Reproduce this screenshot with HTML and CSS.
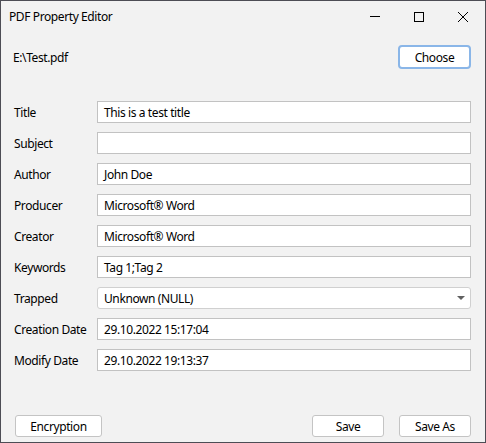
FILE: index.html
```html
<!DOCTYPE html>
<html>
<head>
<meta charset="utf-8">
<link rel="stylesheet" href="styles.css">
</head>
<body>
<div class="window">
  <div class="titlebar">
    <span class="title">PDF Property Editor</span>
    <div class="controls">
      <span class="ctl"><svg width="12" height="12" viewBox="0 0 12 12"><line x1="1" y1="5.5" x2="11" y2="5.5" stroke="#000" stroke-width="1"/></svg></span>
      <span class="ctl"><svg width="12" height="12" viewBox="0 0 12 12"><rect x="1.5" y="1.5" width="9" height="9" fill="none" stroke="#000" stroke-width="1"/></svg></span>
      <span class="ctl"><svg width="12" height="12" viewBox="0 0 12 12"><path d="M1 1 L11 11 M11 1 L1 11" stroke="#000" stroke-width="1"/></svg></span>
    </div>
  </div>
  <div class="content">
    <div class="toprow">
      <span class="path">E:\Test.pdf</span>
      <button class="btn btn-default">Choose</button>
    </div>
    <div class="form">
      <label>Title</label><div class="input">This is a test title</div>
      <label>Subject</label><div class="input"></div>
      <label>Author</label><div class="input">John Doe</div>
      <label>Producer</label><div class="input">Microsoft® Word</div>
      <label>Creator</label><div class="input">Microsoft® Word</div>
      <label>Keywords</label><div class="input">Tag 1;Tag 2</div>
      <label>Trapped</label><div class="input select"><span>Unknown (NULL)</span><span class="arrow"></span></div>
      <label>Creation Date</label><div class="input">29.10.2022 15:17:04</div>
      <label>Modify Date</label><div class="input">29.10.2022 19:13:37</div>
    </div>
    <div class="footer">
      <button class="btn btn-enc">Encryption</button>
      <div class="right">
        <button class="btn btn-save">Save</button>
        <button class="btn btn-save">Save As</button>
      </div>
    </div>
  </div>
</div>
</body>
</html>
```
FILE: styles.css
```css
html, body {
  margin: 0;
  padding: 0;
}
body {
  font-family: "Noto Sans", "Open Sans", sans-serif;
  font-size: 12px;
  letter-spacing: -0.4px;
  color: #000;
}
.window {
  width: 486px;
  height: 443px;
  box-sizing: border-box;
  border: 1px solid #4d4d55;
  background: #f2f2f2;
  display: flex;
  flex-direction: column;
}
.titlebar {
  height: 31px;
  display: flex;
  align-items: center;
  justify-content: space-between;
  padding-left: 8px;
}
.title {
  font-size: 12px;
}
.controls {
  display: flex;
  height: 31px;
}
.ctl {
  width: 44px;
  display: flex;
  align-items: center;
  justify-content: center;
}
.content {
  flex: 1;
  display: flex;
  flex-direction: column;
  padding: 13px 14px 5px 12px;
}
.toprow {
  display: flex;
  justify-content: space-between;
  align-items: center;
  height: 24px;
}
.btn {
  font-family: inherit;
  font-size: 12px;
  letter-spacing: -0.4px;
  color: #000;
  background: #fff;
  border: 1px solid #c4c4c4;
  border-radius: 3px;
  padding: 0;
  height: 22px;
}
.btn-default {
  width: 73px;
  height: 24px;
  border: 2px solid #8ab6e8;
  border-radius: 4px;
}
.form {
  margin-top: 32px;
  display: grid;
  grid-template-columns: 84px 1fr;
  grid-auto-rows: 22px;
  row-gap: 9px;
}
.form label {
  display: flex;
  align-items: center;
  padding-left: 1px;
}
.input {
  box-sizing: border-box;
  height: 22px;
  background: #fff;
  border: 1px solid #c2c2c2;
  display: flex;
  align-items: center;
  padding-left: 6px;
}
.select {
  border-color: #d0d0d0;
  border-radius: 3px;
  justify-content: space-between;
  padding-right: 5px;
}
.arrow {
  width: 0;
  height: 0;
  border-left: 4px solid transparent;
  border-right: 4px solid transparent;
  border-top: 4px solid #606060;
}
.footer {
  margin-top: auto;
  display: flex;
  justify-content: space-between;
  padding-left: 2px;
}
.btn-enc {
  width: 87px;
}
.right {
  display: flex;
  gap: 15px;
}
.btn-save {
  width: 72px;
}
```
